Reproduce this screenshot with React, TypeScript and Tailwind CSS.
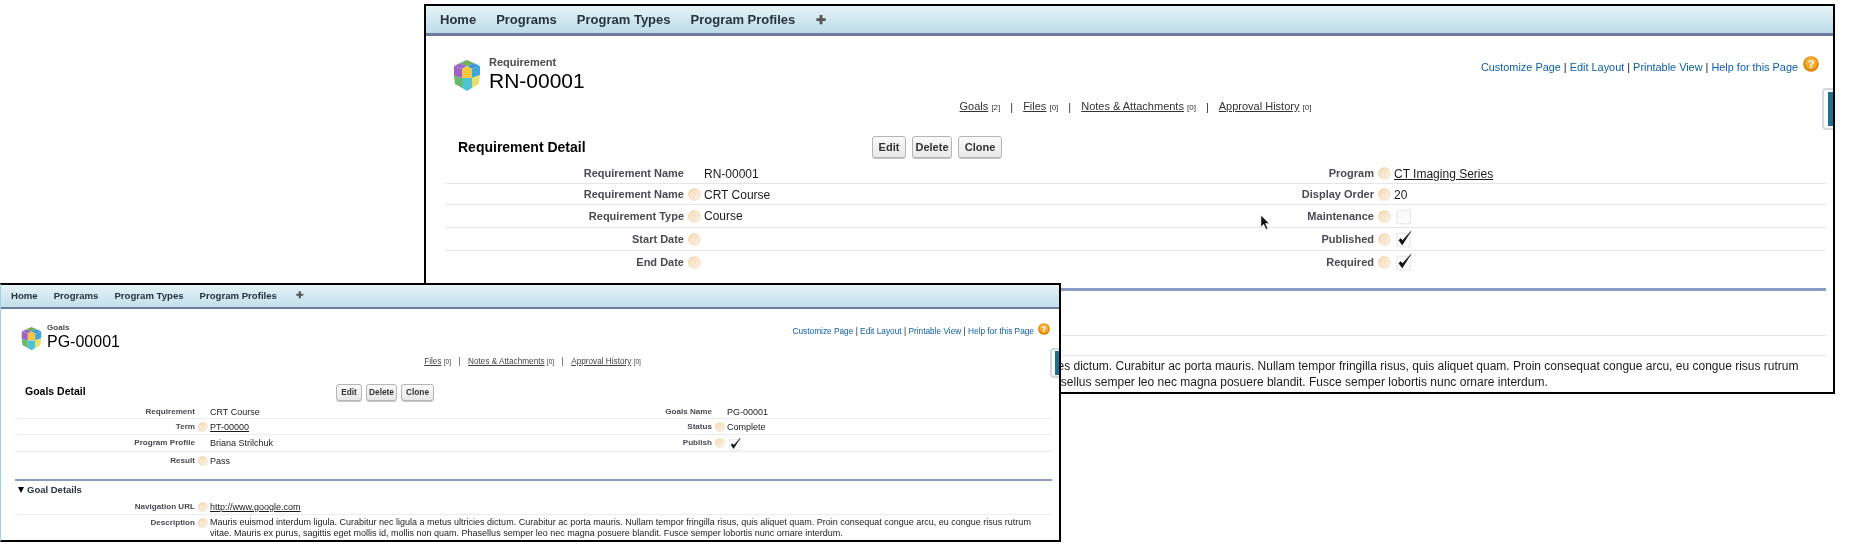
import React from "react";

function Cube({ className }: { className: string }) {
  return (
    <svg viewBox="0 0 28 32" className={className}>
      <polygon points="14,0 21,3 14,6 7,3" fill="#6fae55" />
      <polygon points="7,3 14,6 9,9 1,6" fill="#9a6cc4" />
      <polygon points="21,3 27,6 19,9 14,6" fill="#3f9bd6" />
      <polygon points="9,9 14,6 19,9 19,18 9,18" fill="#f5c842" />
      <polygon points="1,6 9,9 9,18 1,16" fill="#a062c0" />
      <polygon points="19,9 27,6 27,15 19,18" fill="#3fa6dc" />
      <polygon points="1,16 9,18 9,28 2,24" fill="#66bb6a" />
      <polygon points="9,18 19,18 19,28 14,31 9,28" fill="#4fc3d0" />
      <polygon points="19,18 27,15 26,24 19,28" fill="#e8e06a" />
    </svg>
  );
}

function Help({ className }: { className: string }) {
  return (
    <svg viewBox="0 0 12 12" className={className}>
      <defs>
        <radialGradient id="helpFade" cx="0.6" cy="0.6" r="0.6">
          <stop offset="0" stopColor="#fbf0e0" />
          <stop offset="0.7" stopColor="#f8e5cc" />
          <stop offset="1" stopColor="#f1d2a8" />
        </radialGradient>
      </defs>
      <circle cx="6" cy="6" r="5.8" fill="url(#helpFade)" />
      <text x="6" y="8.8" textAnchor="middle" fontSize="8" fontWeight="700" fill="#f0dcc0" fontFamily="Liberation Sans">?</text>
    </svg>
  );
}

function OrangeHelp({ className }: { className: string }) {
  return (
    <svg viewBox="0 0 16 16" className={className}>
      <circle cx="8" cy="8" r="7.8" fill="#e08a08" />
      <circle cx="8" cy="7" r="6" fill="#f4ad30" />
      <text x="8" y="12.2" textAnchor="middle" fontSize="11.5" fontWeight="700" fill="#fff" fontFamily="Liberation Sans">?</text>
    </svg>
  );
}

function Check({ className, on }: { className: string; on: boolean }) {
  return (
    <svg viewBox="0 0 14 14" className={className}>
      <rect x="1.5" y="2.5" width="10.5" height="10.5" fill="#fbfbfb" stroke="#cfcfcf" strokeWidth="0.7" strokeDasharray="1 1" />
      {on && <path d="M3 8 L5.6 11.6 L12.4 1 L5.8 8.2 L4.4 6.6 Z" fill="#111" stroke="#111" strokeWidth="0.4" />}
    </svg>
  );
}

type Cell = { label: string; help?: boolean; value?: string; link?: boolean; check?: "on" | "off" };

function Row({
  left, right, grid, label, value, icon, check,
}: {
  left: Cell; right?: Cell; grid: string; label: string; value: string; icon: string; check: string;
}) {
  const side = (c: Cell) => (
    <>
      <div className={`text-right font-bold text-[#4a4a56] whitespace-nowrap ${label}`}>{c.label}</div>
      <div className="flex justify-center items-center">{c.help && <Help className={icon} />}</div>
      <div className={`text-[#1c1c1c] whitespace-nowrap ${value}`}>
        {c.check ? <Check className={check} on={c.check === "on"} /> : c.link ? <span className="underline">{c.value}</span> : c.value}
      </div>
    </>
  );
  return (
    <div className={`grid items-center h-full ${grid}`}>
      {side(left)}
      {right ? side(right) : <><div /><div /><div /></>}
    </div>
  );
}

const desc1 = "Mauris euismod interdum ligula. Curabitur nec ligula a metus ultricies dictum. Curabitur ac porta mauris. Nullam tempor fringilla risus, quis aliquet quam. Proin consequat congue arcu, eu congue risus rutrum";
const desc2 = "vitae. Mauris ex purus, sagittis eget mollis id, mollis non quam. Phasellus semper leo nec magna posuere blandit. Fusce semper lobortis nunc ornare interdum.";

function Handle({ outer, inner }: { outer: string; inner: string }) {
  return (
    <div className={`absolute right-0 border-2 border-r-0 border-[#d3d9de] rounded-l-[4px] bg-white flex justify-end items-center ${outer}`}>
      <div className={`bg-[#1f6f8f] ${inner}`} />
    </div>
  );
}

function Btn({ children, className }: { children: string; className: string }) {
  return (
    <div className={`flex items-center justify-center border border-[#b5b5b5] rounded-[3px] bg-gradient-to-b from-[#fafafa] to-[#e8e8e8] font-bold text-[#333] shadow-[0_1px_0_#c8c8c8] ${className}`}>
      {children}
    </div>
  );
}

function BackWindow() {
  const rowProps = {
    grid: "grid-cols-[239px_20px_450px_220px_20px_1fr]",
    label: "text-[11px]",
    value: "text-[12px]",
    icon: "w-[13px] h-[13px]",
    check: "w-[18px] h-[18px] ml-[1px]",
  };
  return (
    <div className="absolute left-[424px] top-[4px] w-[1411px] h-[390px] border-2 border-black bg-white overflow-hidden flex flex-col blur-[0.4px]">
      <div className="h-[30px] shrink-0 border-b-[3px] border-[#6d7b9c] bg-gradient-to-b from-[#e6f2f7] to-[#bcdce8] flex items-center gap-[20px] pl-[14px] text-[13px] font-bold text-[#27333d]">
        <span>Home</span><span>Programs</span><span>Program Types</span><span>Program Profiles</span>
        <span className="text-[12px] text-[#555] ml-[1px]">✚</span>
      </div>
      <div className="flex justify-between pt-[20px] pl-[27px] pr-[14px] h-[56px] shrink-0">
        <div className="flex items-start gap-[8px]">
          <Cube className="w-[28px] h-[32px] mt-[4px]" />
          <div>
            <div className="text-[11px] leading-[13px] font-bold text-[#4a4a56]">Requirement</div>
            <div className="text-[21px] leading-[24px] text-black">RN-00001</div>
          </div>
        </div>
        <div className="flex items-start gap-[5px]">
          <div className="text-[10.9px] leading-[20px] mt-[1px] text-[#0f5fa8] whitespace-nowrap">
            Customize Page <span className="text-[#222]">|</span> Edit Layout <span className="text-[#222]">|</span> Printable View <span className="text-[#222]">|</span> Help for this Page
          </div>
          <OrangeHelp className="w-[16px] h-[16px]" />
        </div>
      </div>
      <div className="mt-[7px] h-[16px] flex justify-center items-center gap-[10px] pl-[12px] text-[11px] leading-[16px] text-[#333] shrink-0 whitespace-nowrap">
        <span><span className="underline">Goals</span> <span className="text-[8px]">[2]</span></span><span>|</span>
        <span><span className="underline">Files</span> <span className="text-[8px]">[0]</span></span><span>|</span>
        <span><span className="underline">Notes &amp; Attachments</span> <span className="text-[8px]">[0]</span></span><span>|</span>
        <span><span className="underline">Approval History</span> <span className="text-[8px]">[0]</span></span>
      </div>
      <div className="mt-[21px] h-[22px] flex items-center pl-[32px] shrink-0">
        <div className="w-[414px] text-[14px] font-bold text-black">Requirement Detail</div>
        <div className="flex gap-[6px] text-[11px]">
          <Btn className="w-[34px] h-[22px]">Edit</Btn>
          <Btn className="w-[40px] h-[22px]">Delete</Btn>
          <Btn className="w-[44px] h-[22px]">Clone</Btn>
        </div>
      </div>
      <div className="mt-[5px] ml-[19px] mr-[7px] flex flex-col shrink-0">
        <div className="h-[21px] pt-[1px] border-b border-[#e6e6e6]"><Row {...rowProps} left={{ label: "Requirement Name", value: "RN-00001" }} right={{ label: "Program", help: true, value: "CT Imaging Series", link: true }} /></div>
        <div className="h-[21px] pt-[1px] border-b border-[#e6e6e6]"><Row {...rowProps} left={{ label: "Requirement Name", help: true, value: "CRT Course" }} right={{ label: "Display Order", help: true, value: "20" }} /></div>
        <div className="h-[23px] border-b border-[#e6e6e6]"><Row {...rowProps} left={{ label: "Requirement Type", help: true, value: "Course" }} right={{ label: "Maintenance", help: true, check: "off" }} /></div>
        <div className="h-[23px] border-b border-[#e6e6e6]"><Row {...rowProps} left={{ label: "Start Date", help: true }} right={{ label: "Published", help: true, check: "on" }} /></div>
        <div className="h-[23px] pb-[1px]"><Row {...rowProps} left={{ label: "End Date", help: true }} right={{ label: "Required", help: true, check: "on" }} /></div>
      </div>
      <div className="mt-[14px] ml-[19px] mr-[7px] h-[3px] bg-[#8a9cc4] shrink-0" />
      <div className="ml-[19px] mr-[7px] h-[45px] border-b border-[#e6e6e6] shrink-0 text-[14px] font-bold pt-[4px]">Goal Details</div>
      <div className="ml-[19px] mr-[7px] h-[20px] border-b border-[#e6e6e6] shrink-0" />
      <div className="ml-[19px] mr-[7px] pt-[2px] shrink-0 grid grid-cols-[239px_20px_1fr]">
        <div /><div />
        <div className="text-[12px] leading-[16px] text-[#1c1c1c] whitespace-nowrap">
          <div>{desc1}</div><div>{desc2}</div>
        </div>
      </div>
      <Handle outer="top-[82px] w-[11px] h-[42px]" inner="w-[5px] h-[34px]" />
    </div>
  );
}

function FrontWindow() {
  const rowProps = {
    grid: "grid-cols-[180px_15px_342px_160px_15px_1fr]",
    label: "text-[8.1px]",
    value: "text-[9px] pt-[2px]",
    icon: "w-[10px] h-[10px]",
    check: "w-[14px] h-[14px] ml-[1px]",
  };
  return (
    <div className="absolute left-0 top-[283px] w-[1061px] h-[259px] border-2 border-l border-black border-l-[#9fcfe2] bg-white overflow-hidden flex flex-col blur-[0.4px]">
      <div className="h-[24px] shrink-0 border-b-[2px] border-[#6d7b9c] bg-gradient-to-b from-[#e6f2f7] to-[#c2dfea] flex items-center gap-[16px] pl-[10px] text-[9.6px] font-bold text-[#27333d]">
        <span>Home</span><span>Programs</span><span>Program Types</span><span>Program Profiles</span>
        <span className="text-[9px] text-[#555] ml-[3px]">✚</span>
      </div>
      <div className="flex justify-between pt-[14px] pl-[20px] pr-[9px] h-[43px] shrink-0">
        <div className="flex items-start gap-[5px]">
          <Cube className="w-[21px] h-[24px] mt-[4px]" />
          <div>
            <div className="text-[8.1px] leading-[10px] font-bold text-[#4a4a56]">Goals</div>
            <div className="text-[16px] leading-[18px] text-black">PG-00001</div>
          </div>
        </div>
        <div className="flex items-start gap-[4px]">
          <div className="text-[8.3px] leading-[14px] mt-[1px] text-[#0f5fa8] whitespace-nowrap">
            Customize Page <span className="text-[#222]">|</span> Edit Layout <span className="text-[#222]">|</span> Printable View <span className="text-[#222]">|</span> Help for this Page
          </div>
          <OrangeHelp className="w-[12px] h-[12px]" />
        </div>
      </div>
      <div className="mt-[4px] h-[12px] flex justify-center items-center gap-[7.5px] pl-[5px] text-[8.2px] leading-[12px] text-[#444] shrink-0 whitespace-nowrap">
        <span><span className="underline">Files</span> <span className="text-[6.5px]">[0]</span></span><span>|</span>
        <span><span className="underline">Notes &amp; Attachments</span> <span className="text-[6.5px]">[0]</span></span><span>|</span>
        <span><span className="underline">Approval History</span> <span className="text-[6.5px]">[0]</span></span>
      </div>
      <div className="mt-[16px] h-[16px] flex items-center pl-[24px] shrink-0">
        <div className="w-[311px] text-[10.5px] font-bold text-black">Goals Detail</div>
        <div className="flex gap-[4px] text-[8.3px]">
          <Btn className="w-[26px] h-[17px]">Edit</Btn>
          <Btn className="w-[31px] h-[17px]">Delete</Btn>
          <Btn className="w-[33px] h-[17px]">Clone</Btn>
        </div>
      </div>
      <div className="mt-[4px] ml-[14px] mr-[7px] flex flex-col shrink-0">
        <div className="h-[15px] border-b border-[#ececec]"><Row {...rowProps} left={{ label: "Requirement", value: "CRT Course" }} right={{ label: "Goals Name", value: "PG-00001" }} /></div>
        <div className="h-[16px] border-b border-[#ececec]"><Row {...rowProps} left={{ label: "Term", help: true, value: "PT-00000", link: true }} right={{ label: "Status", help: true, value: "Complete" }} /></div>
        <div className="h-[17px] border-b border-[#ececec]"><Row {...rowProps} left={{ label: "Program Profile", value: "Briana Strilchuk" }} right={{ label: "Publish", help: true, check: "on" }} /></div>
        <div className="h-[18px]"><Row {...rowProps} left={{ label: "Result", help: true, value: "Pass" }} /></div>
      </div>
      <div className="mt-[9px] ml-[14px] mr-[7px] h-[2px] bg-[#8a9cc4] shrink-0" />
      <div className="ml-[17px] h-[18px] shrink-0 flex items-center gap-[3px] text-[9.5px] font-bold text-[#27333d]">
        <span className="w-0 h-0 border-l-[3.5px] border-r-[3.5px] border-t-[6px] border-l-transparent border-r-transparent border-t-black" />
        <span>Goal Details</span>
      </div>
      <div className="ml-[14px] mr-[7px] h-[16px] border-b border-[#ececec] shrink-0"><Row {...rowProps} left={{ label: "Navigation URL", help: true, value: "http://www.google.com", link: true }} /></div>
      <div className="ml-[14px] mr-[7px] pt-[2px] shrink-0 grid grid-cols-[180px_15px_1fr]">
        <div className="text-right font-bold text-[#4a4a56] text-[8.1px] leading-[11px]">Description</div>
        <div className="flex justify-center pt-[1px]"><Help className="w-[10px] h-[10px]" /></div>
        <div className="text-[9px] leading-[11px] text-[#1c1c1c] whitespace-nowrap">
          <div>{desc1}</div><div>{desc2}</div>
        </div>
      </div>
      <Handle outer="top-[63px] w-[9px] h-[30px]" inner="w-[4px] h-[24px]" />
    </div>
  );
}

export default function App() {
  return (
    <div className="relative w-[1849px] h-[557px] bg-white overflow-hidden font-['Liberation_Sans',Arial,sans-serif]">
      <BackWindow />
      <svg viewBox="0 0 12 18" className="absolute left-[1260px] top-[214px] w-[11px] h-[17px]">
        <path d="M1 1 L1 14 L4 11 L6.5 16.5 L8.5 15.5 L6 10 L10 10 Z" fill="#111" stroke="#fff" strokeWidth="0.6" />
      </svg>
      <FrontWindow />
    </div>
  );
}
